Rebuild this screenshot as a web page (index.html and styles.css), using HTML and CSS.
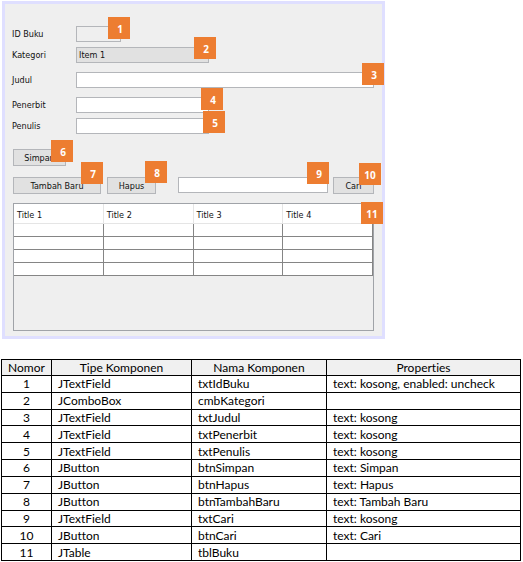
FILE: index.html
```
<!DOCTYPE html>
<html lang="id">
<head>
<meta charset="utf-8">
<title>Form Buku</title>
<link rel="stylesheet" href="styles.css">
</head>
<body>
<form class="panel">
  <div class="row">
    <label for="idBuku">ID Buku</label>
    <div class="control tiny"><input id="idBuku" type="text" disabled><span class="badge b1">1</span></div>
  </div>
  <div class="row tight">
    <label for="kategori">Kategori</label>
    <div class="control medium"><select id="kategori"><option>Item 1</option></select><span class="badge b2">2</span></div>
  </div>
  <div class="row loose">
    <label for="judul">Judul</label>
    <div class="control"><input id="judul" type="text"><span class="badge b3">3</span></div>
  </div>
  <div class="row loose">
    <label for="penerbit">Penerbit</label>
    <div class="control medium"><input id="penerbit" type="text"><span class="badge b4">4</span></div>
  </div>
  <div class="row tight">
    <label for="penulis">Penulis</label>
    <div class="control medium"><input id="penulis" type="text"><span class="badge b5">5</span></div>
  </div>
  <div class="save">
    <div class="control simpan"><button type="button">Simpan</button><span class="badge b6">6</span></div>
  </div>
  <div class="actions">
    <div class="control tambah"><button type="button">Tambah Baru</button><span class="badge b7">7</span></div>
    <div class="control hapus"><button type="button">Hapus</button><span class="badge b8">8</span></div>
    <div class="control search"><input type="text" aria-label="Kata kunci"><span class="badge b9">9</span></div>
    <div class="control cari"><button type="button">Cari</button><span class="badge b10">10</span></div>
  </div>
  <div class="control grid-pane">
    <table class="books">
      <thead><tr><th>Title 1</th><th>Title 2</th><th>Title 3</th><th>Title 4</th></tr></thead>
      <tbody>
        <tr><td></td><td></td><td></td><td></td></tr>
        <tr><td></td><td></td><td></td><td></td></tr>
        <tr><td></td><td></td><td></td><td></td></tr>
        <tr><td></td><td></td><td></td><td></td></tr>
      </tbody>
    </table>
    <span class="badge b11">11</span>
  </div>
</form>

<table class="spec">
  <colgroup><col class="c-no"><col class="c-type"><col class="c-name"><col></colgroup>
  <thead><tr><th>Nomor</th><th>Tipe Komponen</th><th>Nama Komponen</th><th>Properties</th></tr></thead>
  <tbody>
    <tr><td>1</td><td>JTextField</td><td>txtIdBuku</td><td>text: kosong, enabled: uncheck</td></tr>
    <tr><td>2</td><td>JComboBox</td><td>cmbKategori</td><td></td></tr>
    <tr><td>3</td><td>JTextField</td><td>txtJudul</td><td>text: kosong</td></tr>
    <tr><td>4</td><td>JTextField</td><td>txtPenerbit</td><td>text: kosong</td></tr>
    <tr><td>5</td><td>JTextField</td><td>txtPenulis</td><td>text: kosong</td></tr>
    <tr><td>6</td><td>JButton</td><td>btnSimpan</td><td>text: Simpan</td></tr>
    <tr><td>7</td><td>JButton</td><td>btnHapus</td><td>text: Hapus</td></tr>
    <tr><td>8</td><td>JButton</td><td>btnTambahBaru</td><td>text: Tambah Baru</td></tr>
    <tr><td>9</td><td>JTextField</td><td>txtCari</td><td>text: kosong</td></tr>
    <tr><td>10</td><td>JButton</td><td>btnCari</td><td>text: Cari</td></tr>
    <tr><td>11</td><td>JTable</td><td>tblBuku</td><td></td></tr>
  </tbody>
</table>
</body>
</html>
```
FILE: styles.css
```
* { box-sizing: border-box; }

body {
  margin: 0;
  padding: 1px 2px 1px 1px;
  background: #fff;
  color: #000;
  font-family: Lato, "Liberation Sans", sans-serif;
  font-variant-ligatures: none;
}

/* Form */
.panel {
  max-width: 383px;
  margin-left: 1px;
  padding: 22px 8px 5px;
  border: 3px solid #dfdfff;
  background: #efefef;
  color: #111;
  font: 9px/16px "DejaVu Sans Condensed", "DejaVu Sans", sans-serif;
}

.row {
  display: grid;
  grid-template-columns: 63px 1fr;
}
.row label { margin-left: -1px; }
.tight { margin-top: 5px; }
.loose { margin-top: 9px; }

.control { position: relative; }
.tiny { width: 45px; }
.medium { width: 133px; }

input, select, button {
  display: block;
  width: 100%;
  height: 16px;
  margin: 0;
  padding: 0 2px;
  border: 1px solid #b4b6ba;
  border-radius: 0;
  background: #fff;
  color: #111;
  font: inherit;
  line-height: 14px;
  appearance: none;
}
input:disabled { background: #efefef; }
select, button { background: #e1e1e1; opacity: 1; }
button { height: 17px; padding: 0; }

.save { display: flex; margin-top: 15px; }
.simpan { width: 53px; }

.actions { display: flex; margin-top: 11px; }
.tambah { width: 88px; }
.hapus { width: 49px; margin-left: 6px; }
.search { flex: 1; margin-left: 22px; }
.cari { width: 41px; margin-left: 5px; }

.grid-pane {
  min-height: 128px;
  margin-top: 9px;
  border: 1px solid #a0a3a8;
}

.books {
  width: 100%;
  border-collapse: separate;
  border-spacing: 0;
  table-layout: fixed;
  background: #fff;
}
.books th {
  height: 20px;
  padding: 2px 3px 0;
  border-right: 1px solid #e5e5e5;
  border-bottom: 1px solid #e5e5e5;
  font-weight: normal;
  text-align: left;
}
.books td {
  height: 13px;
  padding: 0;
  border-right: 1px solid #858585;
  border-bottom: 1px solid #858585;
}

.badge {
  position: absolute;
  z-index: 1;
  width: 22px;
  height: 22px;
  padding-left: 2px;
  background: #ed7d31;
  color: #fff;
  font: bold 10px/24px "Open Sans", "Noto Sans", sans-serif;
  text-align: center;
}
.b1 { top: -9px; right: -9px; }
.b2 { top: -10px; right: -7px; }
.b3 { top: -9px; right: -10px; }
.b4 { top: -9px; right: -14px; }
.b5 { top: -7px; right: -16px; }
.b6 { top: -9px; right: -7px; }
.b7 { top: -15px; right: -2px; }
.b8 { top: -16px; right: -11px; }
.b9 { top: -15px; right: -1px; }
.b10 { top: -14px; right: -7px; padding: 0; }
.b11 { top: -2px; right: -10px; padding: 0; }

/* Component list */
.spec {
  width: 100%;
  height: 202px;
  margin-top: 20px;
  border-collapse: collapse;
  table-layout: fixed;
  font-size: 12px;
  line-height: 15px;
}
.c-no { width: 50px; }
.c-type { width: 140px; }
.c-name { width: 135px; }
.spec th, .spec td {
  padding: 0 6px;
  border: 1px solid #000;
  text-align: left;
  white-space: nowrap;
}
.spec th {
  background: #f0f0f0;
  font-weight: normal;
  text-align: center;
}
.spec td:first-child { text-align: center; }
```
